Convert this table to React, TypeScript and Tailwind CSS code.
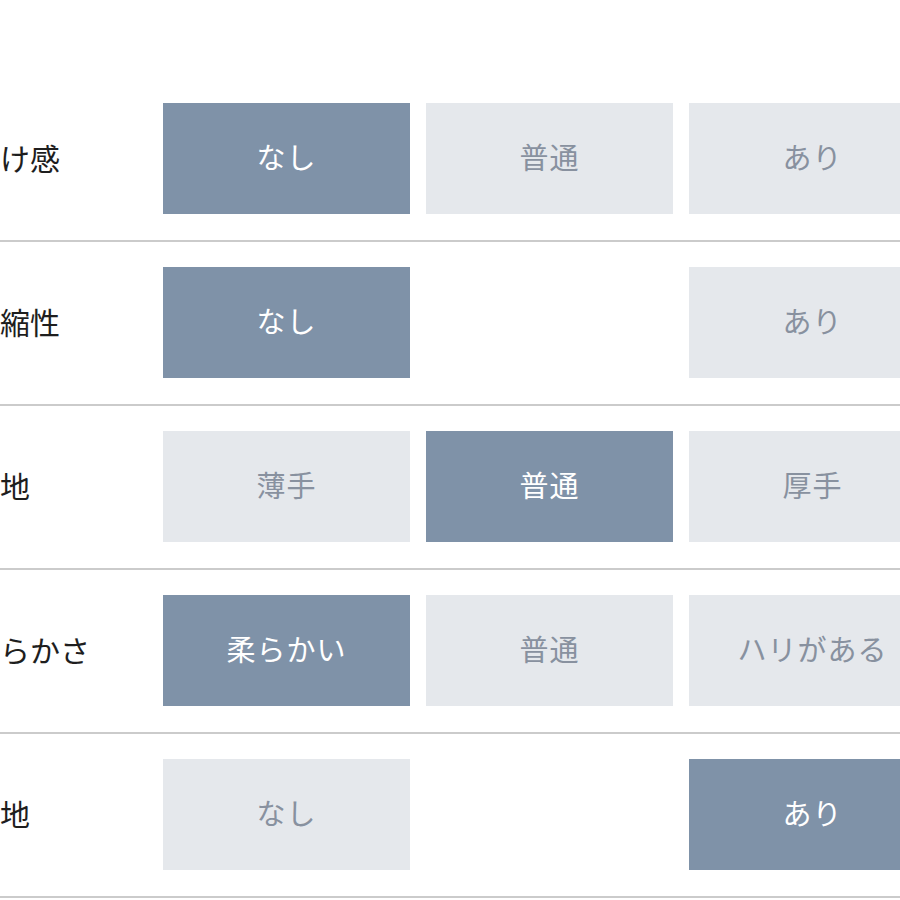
import React from "react";

type Opt = { label: string; selected: boolean } | null;

const rows: { label: string; opts: Opt[] }[] = [
  { label: "透け感", opts: [{ label: "なし", selected: true }, { label: "普通", selected: false }, { label: "あり", selected: false }] },
  { label: "伸縮性", opts: [{ label: "なし", selected: true }, null, { label: "あり", selected: false }] },
  { label: "生地", opts: [{ label: "薄手", selected: false }, { label: "普通", selected: true }, { label: "厚手", selected: false }] },
  { label: "柔らかさ", opts: [{ label: "柔らかい", selected: true }, { label: "普通", selected: false }, { label: "ハリがある", selected: false }] },
  { label: "裏地", opts: [{ label: "なし", selected: false }, null, { label: "あり", selected: true }] },
];

export default function App() {
  return (
    <div
      className="w-[900px] h-[900px] overflow-hidden bg-white pt-[78px]"
      style={{ fontFamily: '"Noto Sans CJK JP", "Noto Sans", sans-serif' }}
    >
      <div className="ml-[-30px] w-[1000px]">
        {rows.map((r, i) => (
          <div key={i} className="flex items-center pt-[25px] pb-[26px] border-b-2 border-[#cbcbcb]">
            <div className="w-[193px] shrink-0 text-[30px] leading-none text-[#1e1e1e] pb-[3px]">{r.label}</div>
            <div className="flex gap-[16px]">
              {r.opts.map((o, j) =>
                o ? (
                  <div
                    key={j}
                    className={
                      o.selected
                        ? "w-[247px] h-[111px] shrink-0 flex items-center justify-center pb-[3px] bg-[#7f92a8] text-white text-[29px] tracking-[1px]"
                        : "w-[247px] h-[111px] shrink-0 flex items-center justify-center pb-[3px] bg-[#e5e8ec] text-[#88919f] text-[29px] tracking-[1px]"
                    }
                  >
                    {o.label}
                  </div>
                ) : (
                  <div key={j} className="w-[247px] h-[111px] shrink-0" />
                )
              )}
            </div>
          </div>
        ))}
      </div>
    </div>
  );
}
